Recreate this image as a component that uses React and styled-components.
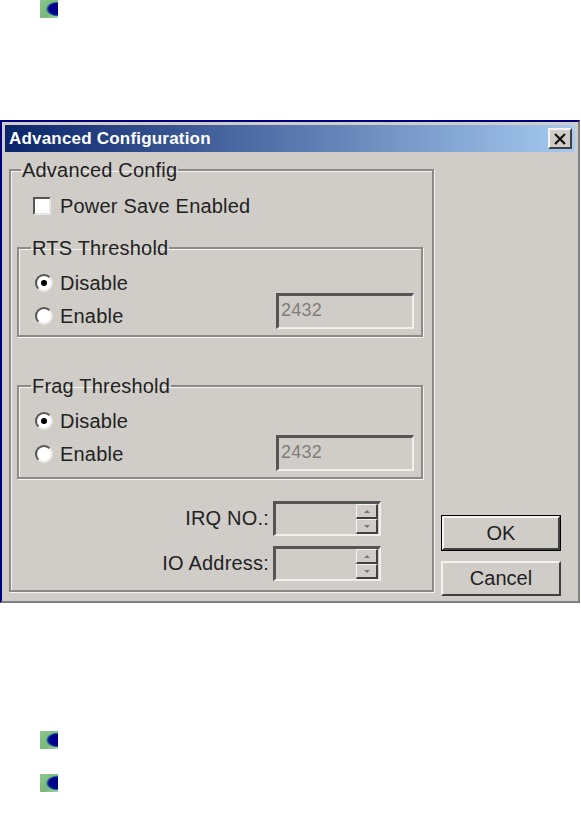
import React from "react";
import styled, { createGlobalStyle } from "styled-components";

const GlobalStyle = createGlobalStyle`
  html, body {
    margin: 0;
    padding: 0;
    background: #fff;
    font-family: "Liberation Sans", Arial, sans-serif;
  }
`;

const Page = styled.div`
  width: 581px;
  height: 821px;
  overflow: hidden;
  display: flex;
  flex-direction: column;
`;

const Bullet = styled.div`
  width: 18px;
  height: 18px;
  margin-left: 40px;
  margin-top: ${({ $top }) => $top}px;
  background: radial-gradient(ellipse 11px 7.5px at 17px 9px, #00008c 0 72%, #1f5f98 88%, transparent 100%),
    linear-gradient(135deg, #8cc88c, #78b878 60%, #a4d4a4);
  filter: blur(0.5px);
`;

const Dialog = styled.div`
  box-sizing: border-box;
  width: 580px;
  height: 483px;
  margin-top: 102px;
  border-top: 2px solid #000080;
  border-left: 2px solid #000080;
  border-right: 2px solid #808080;
  border-bottom: 2px solid #808080;
  background: #d0cdc8;
  padding: 3px;
  display: flex;
  flex-direction: column;
`;

const TitleBar = styled.div`
  height: 27px;
  flex: none;
  display: flex;
  align-items: center;
  justify-content: space-between;
  padding: 0 3px 0 4px;
  background: linear-gradient(90deg, #0a246a, #a6caf0);
`;

const Title = styled.span`
  color: #fff;
  font-size: 17px;
  font-weight: 700;
  letter-spacing: 0.2px;
`;

const raised = `
  border-top: 2px solid #f4f3f0;
  border-left: 2px solid #f4f3f0;
  border-right: 2px solid #404040;
  border-bottom: 2px solid #404040;
  background: #d0cdc8;
`;

const CloseButton = styled.button`
  ${raised}
  box-sizing: border-box;
  width: 24px;
  height: 21px;
  padding: 0;
  display: flex;
  align-items: center;
  justify-content: center;
`;

const Body = styled.div`
  flex: 1;
  display: flex;
  padding: 7px 3px 2px 4px;
`;

const Group = styled.fieldset`
  box-sizing: border-box;
  margin: 0;
  min-width: 0;
  width: ${({ $width }) => $width}px;
  height: ${({ $height }) => $height}px;
  border: 2px solid #8c8a86;
  box-shadow: 1px 1px 0 #f4f3f0, inset 1px 1px 0 #f4f3f0;
  padding: 0;
  color: #222;
`;

const Legend = styled.legend`
  margin-left: ${({ $indent }) => $indent}px;
  padding: 0 1px;
  font-size: 20px;
  letter-spacing: 0.2px;
  line-height: 22px;
  color: #222;
`;

const OuterInner = styled.div`
  display: flex;
  flex-direction: column;
  padding: 12px 0 0 6px;
`;

const CheckRow = styled.div`
  display: flex;
  align-items: center;
  gap: 9px;
  margin: 0 0 0 16px;
  height: 26px;
`;

const CheckBox = styled.span`
  box-sizing: border-box;
  width: 18px;
  height: 18px;
  background: #fff;
  border-top: 2px solid #555;
  border-left: 2px solid #555;
  border-right: 2px solid #e8e6e2;
  border-bottom: 2px solid #e8e6e2;
`;

const Label = styled.span`
  font-size: 20px;
  letter-spacing: 0.2px;
  color: #222;
`;

const SubGroup = styled(Group)`
  margin-top: ${({ $top }) => $top}px;
`;

const RadioColumn = styled.div`
  display: flex;
  align-items: flex-end;
  justify-content: space-between;
  padding: 11px 7px 0 16px;
`;

const Radios = styled.div`
  display: flex;
  flex-direction: column;
  gap: 7px;
`;

const RadioRow = styled.div`
  display: flex;
  align-items: center;
  gap: 7px;
  height: 26px;
`;

const Radio = styled.span`
  box-sizing: border-box;
  width: 18px;
  height: 18px;
  border-radius: 50%;
  background: #fff;
  border-top: 2px solid #555;
  border-left: 2px solid #555;
  border-right: 2px solid #e8e6e2;
  border-bottom: 2px solid #e8e6e2;
  display: flex;
  align-items: center;
  justify-content: center;

  &::after {
    content: "";
    width: 6px;
    height: 6px;
    border-radius: 50%;
    background: ${({ $on }) => ($on ? "#000" : "transparent")};
  }
`;

const sunken = `
  box-sizing: border-box;
  border-top: 3px solid #555;
  border-left: 3px solid #555;
  border-right: 2px solid #f0efec;
  border-bottom: 2px solid #f0efec;
`;

const ValueBox = styled.div`
  ${sunken}
  width: 138px;
  height: 36px;
  margin-bottom: ${({ $drop }) => -$drop}px;
  font-size: 18px;
  letter-spacing: 0.2px;
  line-height: 28px;
  padding-left: 2px;
  color: #7f7d79;
`;

const SpinRow = styled.div`
  display: flex;
  align-items: center;
  justify-content: flex-end;
  width: 364px;
  gap: 4px;
  height: 35px;
  margin-top: ${({ $top }) => $top}px;
`;

const SpinBox = styled.div`
  ${sunken}
  width: 108px;
  height: 35px;
  display: flex;
  flex-direction: column;
  align-items: flex-end;
  justify-content: center;
  padding-right: 1px;
`;

const SpinButton = styled.div`
  ${raised}
  border-width: 1px;
  border-right-width: 2px;
  border-bottom-width: 2px;
  box-sizing: border-box;
  width: 22px;
  height: 15px;
  display: flex;
  align-items: center;
  justify-content: center;

  &::after {
    content: "";
    border-left: 3px solid transparent;
    border-right: 3px solid transparent;
    ${({ $down }) => ($down ? "border-top" : "border-bottom")}: 3px solid #777;
  }
`;

const Side = styled.div`
  display: flex;
  flex-direction: column;
  justify-content: flex-end;
  gap: 10px;
  margin-left: 7px;
`;

const DefaultFrame = styled.div`
  border: 1px solid #000;
`;

const Button = styled.button`
  ${raised}
  box-sizing: border-box;
  width: ${({ $inner }) => ($inner ? 118 : 120)}px;
  height: ${({ $inner }) => ($inner ? 34 : 35)}px;
  padding: 0;
  font-family: inherit;
  font-size: 20px;
  color: #222;
  display: block;
`;

const RadioGroupBody = ({ first, second, drop }) => (
  <RadioColumn>
    <Radios>
      <RadioRow>
        <Radio $on />
        <Label>{first}</Label>
      </RadioRow>
      <RadioRow>
        <Radio />
        <Label>{second}</Label>
      </RadioRow>
    </Radios>
    <ValueBox $drop={drop}>2432</ValueBox>
  </RadioColumn>
);

const Spinner = () => (
  <SpinBox>
    <SpinButton />
    <SpinButton $down />
  </SpinBox>
);

export default function App() {
  return (
    <Page>
      <GlobalStyle />
      <Bullet $top={0} />
      <Dialog>
        <TitleBar>
          <Title>Advanced Configuration</Title>
          <CloseButton>
            <svg width="14" height="12" viewBox="0 0 14 12">
              <path d="M2 1 L12 11 M12 1 L2 11" stroke="#111" strokeWidth="2.2" fill="none" />
            </svg>
          </CloseButton>
        </TitleBar>
        <Body>
          <Group $width={425} $height={433}>
            <Legend $indent={10}>Advanced Config</Legend>
            <OuterInner>
              <CheckRow>
                <CheckBox />
                <Label>Power Save Enabled</Label>
              </CheckRow>
              <SubGroup $width={406} $height={100} $top={18}>
                <Legend $indent={12}>RTS Threshold</Legend>
                <RadioGroupBody first="Disable" second="Enable" drop={0} />
              </SubGroup>
              <SubGroup $width={406} $height={104} $top={38}>
                <Legend $indent={12}>Frag Threshold</Legend>
                <RadioGroupBody first="Disable" second="Enable" drop={4} />
              </SubGroup>
              <SpinRow $top={22}>
                <Label>IRQ NO.:</Label>
                <Spinner />
              </SpinRow>
              <SpinRow $top={10}>
                <Label>IO Address:</Label>
                <Spinner />
              </SpinRow>
            </OuterInner>
          </Group>
          <Side>
            <DefaultFrame>
              <Button $inner>OK</Button>
            </DefaultFrame>
            <Button>Cancel</Button>
          </Side>
        </Body>
      </Dialog>
      <Bullet $top={128} />
      <Bullet $top={25} />
    </Page>
  );
}
